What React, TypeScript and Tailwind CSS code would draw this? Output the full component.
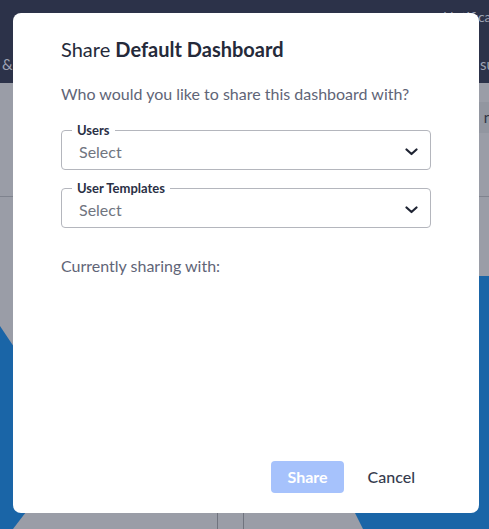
import React from "react";

function Chevron() {
  return (
    <svg width="13" height="8" viewBox="0 0 13 8" fill="none" className="shrink-0">
      <path d="M1.5 1.5L6.5 6L11.5 1.5" stroke="#1f2433" strokeWidth="2.2" strokeLinecap="round" strokeLinejoin="round" />
    </svg>
  );
}

function SelectField({ label, className = "" }: { label: string; className?: string }) {
  return (
    <fieldset className={`border border-[#b4b6bd] rounded-[4px] pl-[10px] pr-[12px] pb-[7px] pt-0 m-0 ${className}`}>
      <legend className="px-[5px] text-[13px] leading-[16px] font-bold text-[#2a3045]">{label}</legend>
      <div className="mt-[4px] flex items-center justify-between pl-[7px]">
        <span className="text-[16px] leading-[20px] text-[#70757f]">Select</span>
        <Chevron />
      </div>
    </fieldset>
  );
}

export default function App() {
  return (
    <div className="relative w-[489px] h-[529px] overflow-hidden bg-[#9a9da7]" style={{ fontFamily: "Lato, 'Noto Sans', sans-serif" }}>
      {/* dimmed page behind */}
      <div className="h-[83px] bg-[#2c3249] relative">
        <span className="absolute left-[443px] top-[6px] text-[14px] text-[#9ea3b4]">Notifications</span>
        <span className="absolute left-[2px] top-[53px] text-[15px] text-[#9ea3b4]">&amp;</span>
        <span className="absolute left-[480px] top-[53px] text-[15px] text-[#9ea3b4]">su</span>
      </div>
      <div className="flex flex-col">
        <div className="h-[19px]" />
        <div className="h-[31px] ml-auto w-[150px] bg-[#9296a0] flex items-center justify-end pr-[0px]">
          <span className="text-[15px] text-[#2f3344] translate-x-[3px]">n</span>
        </div>
        <div className="h-[64px] border-b border-[#7f838e]" />
      </div>
      <svg className="absolute inset-0" width="489" height="529" viewBox="0 0 489 529">
        <polygon points="0,326 16,350 26,512 13,529 0,529" fill="#1a65a7" />
        <polygon points="470,276 489,276 489,529 363,529 355,513" fill="#1a65a7" />
        <line x1="217.5" y1="500" x2="217.5" y2="529" stroke="#70737e" strokeWidth="1" />
        <line x1="243.5" y1="500" x2="243.5" y2="529" stroke="#70737e" strokeWidth="1" />
      </svg>

      {/* modal */}
      <div className="absolute left-[13px] top-[13px] w-[466px] h-[500px] bg-white rounded-[8px] flex flex-col px-[48px] pt-[22px] pb-[20px]">
        <h2 className="text-[20px] leading-[28px] text-[#252a3a] m-0">
          Share <span className="font-bold">Default Dashboard</span>
        </h2>
        <p className="mt-[19px] text-[16px] leading-[24px] text-[#5f6577]">Who would you like to share this dashboard with?</p>
        <SelectField label="Users" className="mt-[16px]" />
        <SelectField label="User Templates" className="mt-[10px]" />
        <p className="mt-[26px] text-[16px] leading-[24px] text-[#5f6577]">Currently sharing with:</p>
        <div className="flex-1" />
        <div className="flex justify-end gap-2">
          <button className="h-[32px] px-4 rounded-[4px] bg-[#a6c2fc] text-white text-[16px] font-bold">Share</button>
          <button className="h-[32px] px-4 text-[#353b4e] text-[16px] font-medium">Cancel</button>
        </div>
      </div>
    </div>
  );
}
